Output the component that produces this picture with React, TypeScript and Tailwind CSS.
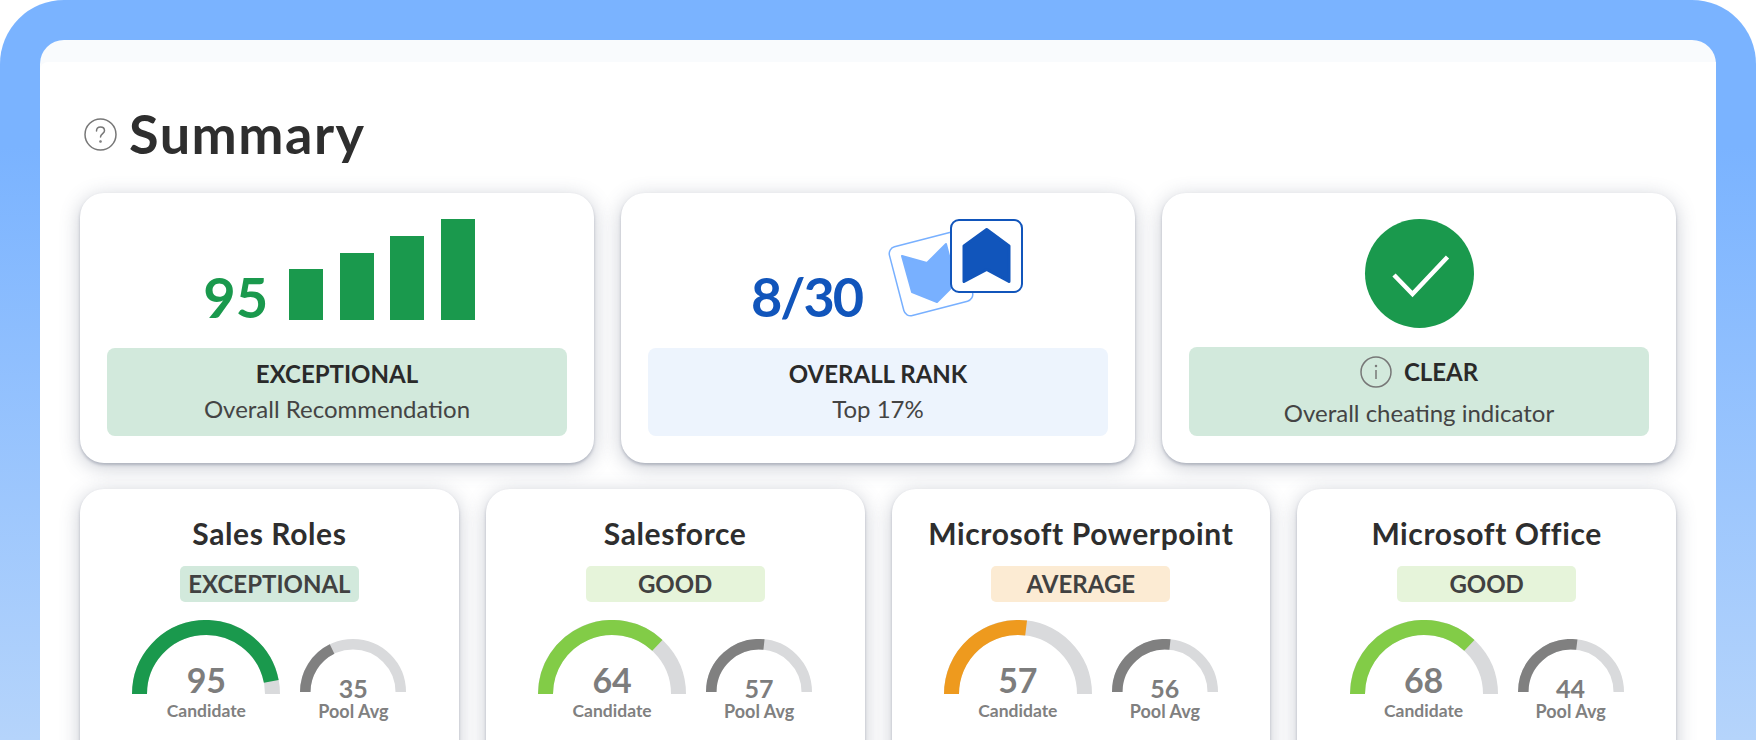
const SKILLS = [
  { title: 'Sales Roles', tag: 'EXCEPTIONAL', tagBg: 'bg-[#d2e9dc]', color: '#1a994d', score: 95, sweep: 169, pool: 35, poolSweep: 64 },
  { title: 'Salesforce', tag: 'GOOD', tagBg: 'bg-[#e6f4da]', color: '#82cc47', score: 64, sweep: 133, pool: 57, poolSweep: 96 },
  { title: 'Microsoft Powerpoint', tag: 'AVERAGE', tagBg: 'bg-[#fcebd3]', color: '#ee9a1e', score: 57, sweep: 97, pool: 56, poolSweep: 96 },
  { title: 'Microsoft Office', tag: 'GOOD', tagBg: 'bg-[#e6f4da]', color: '#82cc47', score: 68, sweep: 133, pool: 44, poolSweep: 97 },
];

function Arc({ size, stroke, sweep, color }: { size: number; stroke: number; sweep: number; color: string }) {
  const c = size / 2;
  const r = c - stroke / 2;
  const a = (Math.PI * (180 - sweep)) / 180;
  const x = c + r * Math.cos(a);
  const y = c - r * Math.sin(a);
  return (
    <svg width={size} height={c} viewBox={`0 0 ${size} ${c}`} className="block">
      <path d={`M${c - r} ${c}A${r} ${r} 0 0 1 ${c + r} ${c}`} fill="none" stroke="#d9dadc" strokeWidth={stroke} />
      <path d={`M${c - r} ${c}A${r} ${r} 0 0 1 ${x} ${y}`} fill="none" stroke={color} strokeWidth={stroke} />
    </svg>
  );
}

function SkillCard({ skill }: { skill: (typeof SKILLS)[number] }) {
  return (
    <div className="h-[300px] rounded-[24px] bg-white pt-[25px] shadow-[0_2px_3px_rgba(80,90,115,0.32),0_4px_20px_rgba(80,90,115,0.32)]">
      <h3 className="text-center text-[30px] leading-[38px] font-bold tracking-[0.6px] text-[#2e2e2e]">{skill.title}</h3>
      <div className={`mx-auto mt-[14px] flex h-[36px] w-[179px] items-center justify-center rounded-[5px] text-[24px] font-bold text-[#414141] ${skill.tagBg}`}>
        {skill.tag}
      </div>
      <div className="mt-[18px] flex items-end justify-center gap-[20px] text-[#7d7d7d]">
        <div className="flex w-[148px] flex-col items-center">
          <div className="relative h-[74px] w-[148px]">
            <Arc size={148} stroke={15} sweep={skill.sweep} color={skill.color} />
            <span className="absolute inset-x-0 bottom-[-6px] text-center text-[34px] leading-[40px] font-bold">{skill.score}</span>
          </div>
          <span className="mt-[5px] text-[17.5px] leading-[24px] font-bold text-[#808080]">Candidate</span>
        </div>
        <div className="flex w-[106px] flex-col items-center">
          <div className="relative h-[53px] w-[106px]">
            <Arc size={106} stroke={10.5} sweep={skill.poolSweep} color="#808080" />
            <span className="absolute inset-x-0 bottom-[-11px] text-center text-[25px] leading-[30px] font-bold">{skill.pool}</span>
          </div>
          <span className="mt-[7px] text-[18px] leading-[24px] font-bold text-[#808080]">Pool Avg</span>
        </div>
      </div>
    </div>
  );
}

function RankIcon() {
  return (
    <svg width="142" height="110" viewBox="0 0 142 110" fill="none" className="block">
      <rect x="12.500" y="23.500" width="71" height="71" rx="7" fill="#fff" stroke="#78b0ff" strokeWidth="1.500" transform="rotate(-14.600 48 59)" />
      <path d="M19 41L44 48L63 29L73 68L54 87L29 77Z" fill="#78b0ff" stroke="#78b0ff" strokeWidth="2" strokeLinejoin="round" />
      <rect x="68" y="5" width="71" height="72" rx="8" fill="#fff" stroke="#1155bb" strokeWidth="2" />
      <path d="M103.700 14.500L126 31V66.500L103.700 54.500L81 66.500V31Z" fill="#1155bb" stroke="#1155bb" strokeWidth="3" strokeLinejoin="round" />
    </svg>
  );
}

export default function App() {
  return (
    <div className="h-[740px] w-[1756px] overflow-hidden bg-white font-['Lato',sans-serif]">
      <div className="h-full rounded-t-[64px] bg-gradient-to-b from-[#7ab3ff] from-20% to-[#b5d4fb] px-10 pt-10">
        <div className="h-full rounded-t-[24px] bg-[#f9fbfd] pt-[22px]">
          <div className="h-full rounded-tl-[8px] bg-white px-10">
            {/* Heading */}
            <div className="flex items-center gap-[12px] pt-[41px] pl-1">
              <svg width="33" height="33" viewBox="0 0 33 33" fill="none" stroke="#777" strokeWidth="1.500">
                <circle cx="16.500" cy="16.500" r="15.500" />
                <path d="M12.500 13c0-2.500 1.800-4 4-4s4 1.500 4 3.700c0 2.800-4 3-4 6.300" strokeLinecap="round" />
                <circle cx="16.500" cy="23.500" r="0.600" />
              </svg>
              <h1 className="text-[54px] leading-[62px] font-bold tracking-[1.5px] text-[#2e2e2e]">Summary</h1>
            </div>

            {/* Overall cards */}
            <div className="mt-[28px] grid grid-cols-3 gap-[27px]">
              <div className="flex h-[270px] flex-col justify-end rounded-[24px] bg-white px-[27px] pb-[27px] shadow-[0_2px_3px_rgba(80,90,115,0.32),0_4px_20px_rgba(80,90,115,0.32)]">
                <div className="mb-[28px] flex items-end justify-center gap-[21px] pl-[4px]">
                  <span className="-mb-1 text-[56px] leading-[54px] font-bold text-[#1a994d]">95</span>
                  <div className="flex items-end gap-[16.500px]">
                    <div className="h-[51px] w-[34px] bg-[#1a994d]" />
                    <div className="h-[67px] w-[34px] bg-[#1a994d]" />
                    <div className="h-[84px] w-[34px] bg-[#1a994d]" />
                    <div className="h-[101px] w-[34px] bg-[#1a994d]" />
                  </div>
                </div>
                <div className="flex h-[88px] flex-col items-center justify-center rounded-[8px] bg-[#d2e9dc] pb-[2px] text-[24px] leading-[36px] text-[#2a2a2a]">
                  <span className="font-bold">EXCEPTIONAL</span>
                  <span className="-mt-px text-[#444]">Overall Recommendation</span>
                </div>
              </div>

              <div className="flex h-[270px] flex-col justify-end rounded-[24px] bg-white px-[27px] pb-[27px] shadow-[0_2px_3px_rgba(80,90,115,0.32),0_4px_20px_rgba(80,90,115,0.32)]">
                <div className="mb-[23px] flex items-end justify-center gap-[21px] pl-[20px]">
                  <span className="mb-px text-[54px] leading-[54px] font-bold tracking-[-2px] text-[#1155bb]">8/30</span>
                  <RankIcon />
                </div>
                <div className="flex h-[88px] flex-col items-center justify-center rounded-[8px] bg-[#edf4fd] pb-[2px] text-[24px] leading-[36px] text-[#2a2a2a]">
                  <span className="font-bold">OVERALL RANK</span>
                  <span className="-mt-px text-[#444]">Top 17%</span>
                </div>
              </div>

              <div className="flex h-[270px] flex-col items-center justify-end rounded-[24px] bg-white px-[27px] pb-[27px] shadow-[0_2px_3px_rgba(80,90,115,0.32),0_4px_20px_rgba(80,90,115,0.32)]">
                <div className="mb-[19px] flex h-[109px] w-[109px] items-center justify-center rounded-full bg-[#1a994d]">
                  <svg width="109" height="109" viewBox="0 0 109 109" fill="none">
                    <path d="M29 56L47.500 75L82.500 38" stroke="#fff" strokeWidth="4.500" />
                  </svg>
                </div>
                <div className="flex h-[89px] w-full flex-col items-center justify-center rounded-[8px] bg-[#d2e9dc] pt-[2px] text-[24px] leading-[36px] text-[#2a2a2a]">
                  <div className="flex items-center gap-[12px]">
                    <svg width="32" height="32" viewBox="0 0 32 32" fill="none" stroke="#777" strokeWidth="1.500">
                      <circle cx="16" cy="16" r="15" />
                      <path d="M16 14v9" />
                      <circle cx="16" cy="10" r="0.500" />
                    </svg>
                    <span className="font-bold">CLEAR</span>
                  </div>
                  <span className="mt-[5px] text-[#444]">Overall cheating indicator</span>
                </div>
              </div>
            </div>

            {/* Skill cards */}
            <div className="mt-[26px] grid grid-cols-4 gap-[27px]">
              {SKILLS.map((skill) => (
                <SkillCard key={skill.title} skill={skill} />
              ))}
            </div>
          </div>
        </div>
      </div>
    </div>
  );
}
